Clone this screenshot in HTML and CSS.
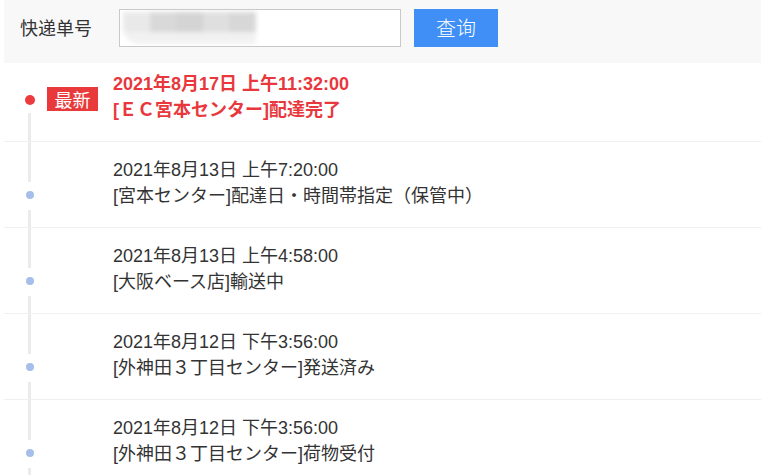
FILE: index.html
```html
<!DOCTYPE html>
<html lang="zh">
<head>
<meta charset="utf-8">
<title>快递查询</title>
<link rel="stylesheet" href="styles.css">
</head>
<body>
<div class="page">
  <div class="search">
    <span class="label">快递单号</span>
    <div class="input">
      <div class="mosaic">
        <span class="tile t1"></span><span class="tile t2"></span><span class="tile t3"></span><span class="tile t4"></span><span class="tile t5"></span>
      </div>
    </div>
    <button class="btn">查询</button>
  </div>

  <div class="timeline">
    <div class="row first">
      <div class="rail">
        <span class="dot red"></span>
        <span class="seg fill"></span>
      </div>
      <div class="tagcol"><span class="badge">最新</span></div>
      <div class="text red-text">
        <div class="line">2021年8月17日 上午11:32:00</div>
        <div class="line">[ＥＣ宮本センター]配達完了</div>
      </div>
    </div>

    <div class="row">
      <div class="rail">
        <span class="seg top"></span>
        <span class="dot"></span>
        <span class="seg fill"></span>
      </div>
      <div class="tagcol"></div>
      <div class="text">
        <div class="line">2021年8月13日 上午7:20:00</div>
        <div class="line">[宮本センター]配達日・時間帯指定（保管中）</div>
      </div>
    </div>

    <div class="row">
      <div class="rail">
        <span class="seg top"></span>
        <span class="dot"></span>
        <span class="seg fill"></span>
      </div>
      <div class="tagcol"></div>
      <div class="text">
        <div class="line">2021年8月13日 上午4:58:00</div>
        <div class="line">[大阪ベース店]輸送中</div>
      </div>
    </div>

    <div class="row">
      <div class="rail">
        <span class="seg top"></span>
        <span class="dot"></span>
        <span class="seg fill"></span>
      </div>
      <div class="tagcol"></div>
      <div class="text">
        <div class="line">2021年8月12日 下午3:56:00</div>
        <div class="line">[外神田３丁目センター]発送済み</div>
      </div>
    </div>

    <div class="row last">
      <div class="rail">
        <span class="seg top"></span>
        <span class="dot"></span>
        <span class="seg fill"></span>
      </div>
      <div class="tagcol"></div>
      <div class="text">
        <div class="line">2021年8月12日 下午3:56:00</div>
        <div class="line">[外神田３丁目センター]荷物受付</div>
      </div>
    </div>
  </div>
</div>
</body>
</html>
```

FILE: styles.css
```css
html, body {
  margin: 0;
  padding: 0;
  background: #ffffff;
}

body {
  font-family: "Liberation Sans", "Noto Sans CJK SC", "Noto Sans CJK JP", sans-serif;
  color: #333333;
  width: 761px;
  height: 475px;
  overflow: hidden;
}

.page {
  margin-left: 4px;
}

.search {
  height: 63px;
  background: #f8f8f8;
  display: flex;
  align-items: center;
  padding-left: 16px;
}

.label {
  font-size: 18px;
  line-height: 24px;
  color: #333333;
  width: 72px;
  white-space: nowrap;
  margin-top: -6px;
}

.input {
  margin-left: 27px;
  width: 282px;
  height: 38px;
  box-sizing: border-box;
  border: 1px solid #c9c9c9;
  background: #ffffff;
  display: flex;
  align-items: center;
  padding-left: 3px;
  overflow: hidden;
  margin-top: -8px;
}

.mosaic {
  width: 133px;
  height: 32px;
  border-radius: 16px 0 0 16px;
  background: linear-gradient(#dedede 0, #dedede 60%, #efefef 60%, #efefef 100%);
  display: flex;
  filter: blur(2px);
  opacity: 0.85;
}

.tile {
  display: block;
  height: 20px;
  flex: 1;
}

.t1 { background: #e6e6e6; }
.t2 { background: #d3d3d3; }
.t3 { background: #cdcdcd; }
.t4 { background: #dadada; }
.t5 { background: #d1d1d1; }

.btn {
  margin-left: 13px;
  width: 84px;
  height: 38px;
  border: none;
  background: #3f8ff6;
  color: #ffffff;
  font-family: "Noto Sans CJK SC", sans-serif;
  font-weight: 300;
  font-size: 20px;
  line-height: 24px;
  padding: 0;
  margin-top: -8px;
}

.timeline {
  display: flex;
  flex-direction: column;
}

.row {
  display: flex;
  border-bottom: 1px solid #f0f0f0;
  padding: 0;
}

.rail {
  width: 43px;
  box-sizing: border-box;
  padding-left: 8px;
  display: flex;
  flex-direction: column;
  align-items: center;
  flex: none;
}

.seg {
  display: block;
  width: 3px;
  background: #ebebeb;
}

.seg.top {
  height: 40px;
}

.seg.fill {
  flex: 1;
}

.dot {
  display: block;
  width: 8px;
  height: 8px;
  border-radius: 50%;
  background: #a6bfea;
  margin: 9px 0 11px;
}

.dot.red {
  width: 10px;
  height: 10px;
  background: #ec3b3e;
  margin: 32px 0 8px;
}

.tagcol {
  width: 66px;
  flex: none;
}

.badge {
  display: flex;
  align-items: center;
  justify-content: center;
  width: 51px;
  height: 24px;
  margin-top: 24px;
  background: #e8393b;
  color: #ffffff;
  font-family: "Noto Sans CJK SC", sans-serif;
  font-size: 18px;
  line-height: 24px;
}

.text {
  padding: 15px 0 18px;
  font-size: 18px;
}

.row.first .text {
  padding: 8px 0 18px;
}

.line {
  line-height: 26px;
  white-space: nowrap;
}

.red-text {
  color: #e8383d;
  font-weight: bold;
}

.row.last {
  border-bottom: none;
  flex: 1;
}
```
